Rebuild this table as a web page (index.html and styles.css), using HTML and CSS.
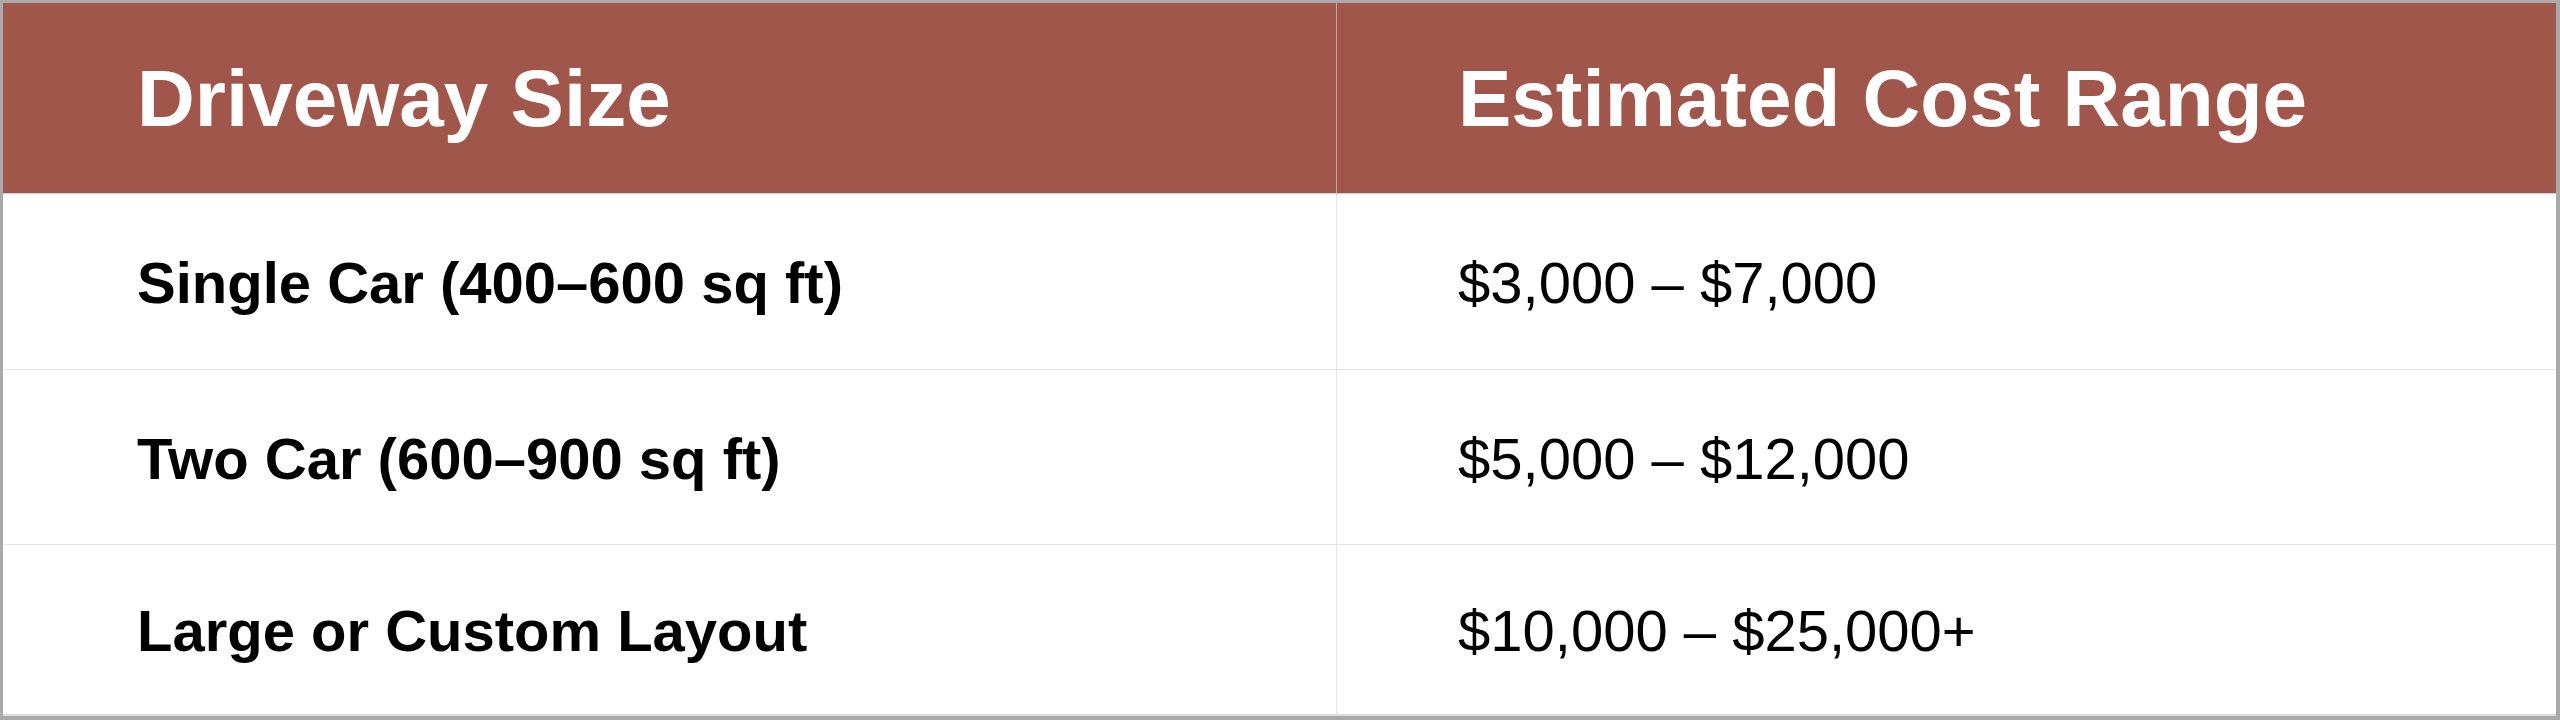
FILE: index.html
```html
<!DOCTYPE html>
<html lang="en">
<head>
<meta charset="utf-8">
<title>Driveway Cost Table</title>
<link rel="stylesheet" href="styles.css">
</head>
<body>
<div class="cost-table">
  <div class="cell head first">Driveway Size</div>
  <div class="cell head second">Estimated Cost Range</div>

  <div class="cell body first size">Single Car (400–600 sq ft)</div>
  <div class="cell body second">$3,000 – $7,000</div>

  <div class="cell body first size">Two Car (600–900 sq ft)</div>
  <div class="cell body second">$5,000 – $12,000</div>

  <div class="cell body first size last">Large or Custom Layout</div>
  <div class="cell body second last">$10,000 – $25,000+</div>
</div>
</body>
</html>
```
FILE: styles.css
```css
html, body {
  margin: 0;
  padding: 0;
  background: #ffffff;
}

.cost-table {
  box-sizing: border-box;
  width: 2560px;
  height: 720px;
  border-style: solid;
  border-color: #a9a9a9;
  border-width: 3px 4px 4px 3px;
  display: grid;
  grid-template-columns: 1333px 1fr;
  grid-template-rows: 191px 176px 175px 1fr;
  font-family: "Liberation Sans", Arial, sans-serif;
  background: #ffffff;
}

.cell {
  box-sizing: border-box;
  display: flex;
  align-items: center;
  white-space: nowrap;
  border-bottom: 1px solid #e4e4e4;
}

.cell.second {
  border-left: 1px solid #e4e4e4;
  padding-left: 121px;
}

.cell.first {
  padding-left: 134px;
}

.head {
  background: #a0564b;
  color: #ffffff;
  font-weight: 700;
  font-size: 80px;
  padding-top: 2px;
  border-bottom-color: #cfcfcf;
}

.head.second {
  border-left-color: #c9a59f;
}

.body {
  color: #000000;
  font-size: 58px;
  font-weight: 400;
  padding-top: 2px;
}

.body.size {
  font-weight: 700;
}

.cell.last {
  border-bottom: 2px solid #dedede;
}
```
